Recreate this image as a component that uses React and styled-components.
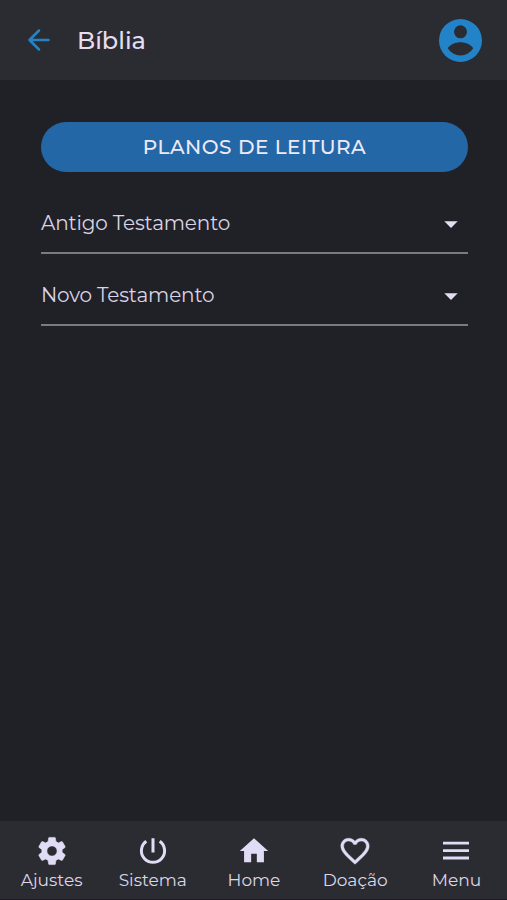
import React from 'react';
import styled, { createGlobalStyle } from 'styled-components';
import { MdArrowDropDown, MdSettings, MdHome, MdFavoriteBorder } from 'react-icons/md';

const GlobalStyle = createGlobalStyle`
  * { box-sizing: border-box; }
  body { margin: 0; background: #202027; font-family: Montserrat, Inter, sans-serif; }
  button { font: inherit; border: 0; padding: 0; background: none; cursor: pointer; }
`;
const Screen = styled.div`
  display: flex; flex-direction: column; width: 100%; height: 900px;
  background: #202027; overflow: hidden;
`;
const Header = styled.header`
  height: 80px; flex: none; display: flex; align-items: center; padding: 0 25px 0 27px; background: #2b2c31;
`;
const IconButton = styled.button`
  display: flex; color: #2383c8;
  svg { width: ${p => p.$size}px; height: ${p => p.$size}px; }
`;
const Title = styled.h1`
  flex: 1; margin: 1px 0 0 26px; font-size: 24px; line-height: 32px; font-weight: 500; color: #e4def0;
`;
const Label = styled.span`
  display: inline-block; white-space: nowrap; letter-spacing: ${p => p.$spacing || 0}px;
`;
const Content = styled.main`
  flex: 1; display: flex; flex-direction: column; padding: 42px 39px 0 41px;
`;
const PlansButton = styled.button`
  height: 50px; border-radius: 25px; background: #2367a7; color: #eee9f7;
  font-size: 20px; font-weight: 500; margin-bottom: 10px;
`;
const Row = styled.button`
  height: 72px; display: flex; align-items: center; justify-content: space-between;
  border-bottom: 2px solid #7b7a7e; color: #d9d4e5; font-size: 20px; padding: 12px 1px 0 0;
  svg { width: 32px; height: 32px; margin-top: 2px; color: #e4def0; }
`;
const Navigation = styled.nav`
  display: grid; grid-template-columns: repeat(5, 1fr); height: 79px; flex: none;
  padding-left: 1px; background: #2b2c32; border-bottom: 1px solid #1e1826;
`;
const NavItem = styled.button`
  display: flex; flex-direction: column; align-items: center; padding-top: 13px;
  color: #dcd7e8; font-size: 17px; line-height: 22px;
  svg { width: 34px; height: 34px; margin-bottom: 1px; color: #e1dcf5; }
`;

const BackIcon = () => (
  <svg viewBox="0 0 24 24" fill="none" stroke="currentColor" strokeWidth="2.5" strokeLinecap="round" strokeLinejoin="round">
    <path d="M21.5 12h-19M12 2.5 2.5 12l9.5 9.5" />
  </svg>
);
const AccountIcon = () => (
  <svg viewBox="0 0 43 43" fill="currentColor">
    <path fillRule="evenodd" d="M21.5 0a21.5 21.5 0 1 1 0 43a21.5 21.5 0 1 1 0-43ZM21.5 6.3a6.5 6.5 0 1 0 0 13a6.5 6.5 0 1 0 0-13ZM21.5 23.2c-4.8 0-10.2 2-12.7 6c2.8 4.2 7.3 7.2 12.7 7.2s9.9-3 12.7-7.2c-2.5-4-7.9-6-12.7-6Z" />
  </svg>
);
const PowerIcon = () => (
  <svg viewBox="0 0 34 34" fill="none" stroke="currentColor" strokeWidth="3">
    <path d="M17 4.2v14.3M10.3 7.3a11.6 11.6 0 1 0 13.4 0" />
  </svg>
);
const MenuIcon = () => (
  <svg viewBox="0 0 34 34" fill="none" stroke="currentColor" strokeWidth="2.8">
    <path d="M4 9.2h26M4 16.6h26M4 24h26" />
  </svg>
);
const HeartIcon = styled(MdFavoriteBorder)`
  path:last-child { stroke: currentColor; stroke-width: 0.3; }
`;
const SettingsIcon = styled(MdSettings)`
  path:last-child { stroke: currentColor; stroke-width: 0.4; }
`;

const items = [
  ['Ajustes', SettingsIcon], ['Sistema', PowerIcon], ['Home', MdHome],
  ['Doação', HeartIcon], ['Menu', MenuIcon],
];

export default function App() {
  return (
    <Screen>
      <GlobalStyle />
      <Header>
        <IconButton $size={24} aria-label="Voltar"><BackIcon /></IconButton>
        <Title><Label>Bíblia</Label></Title>
        <IconButton $size={43} aria-label="Conta"><AccountIcon /></IconButton>
      </Header>
      <Content>
        <PlansButton><Label $spacing={0.5}>PLANOS DE LEITURA</Label></PlansButton>
        <Row><Label $spacing={-0.15}>Antigo Testamento</Label><MdArrowDropDown /></Row>
        <Row><Label $spacing={-0.15}>Novo Testamento</Label><MdArrowDropDown /></Row>
      </Content>
      <Navigation>
        {items.map(([name, Icon]) => <NavItem key={name}><Icon /><Label>{name}</Label></NavItem>)}
      </Navigation>
    </Screen>
  );
}
